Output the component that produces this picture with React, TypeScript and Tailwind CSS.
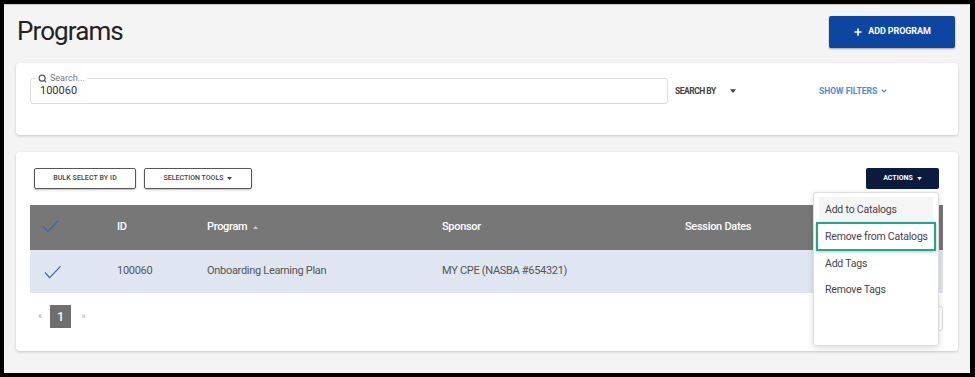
import React from 'react';
import { Search, Plus, ChevronDown } from 'lucide-react';

const Caret: React.FC<{ className?: string }> = ({ className }) => (
  <svg viewBox="0 0 8 5" className={className} fill="currentColor">
    <path d="M0 0h8L4 5z" />
  </svg>
);

const Check: React.FC<{ className?: string }> = ({ className }) => (
  <svg viewBox="0 0 18 14" className={className} fill="none" stroke="currentColor" strokeWidth="1.3">
    <path d="M1 7.5l5 5.5L17.5 1" />
  </svg>
);

const menuItems = ['Add to Catalogs', 'Remove from Catalogs', 'Add Tags', 'Remove Tags'];

const App: React.FC = () => {
  return (
    <div className="w-[975px] h-[377px] bg-black pt-[4px] pl-[4px] pr-[5px] pb-[4px] font-['Roboto',sans-serif]">
      <div className="h-full bg-[#f4f4f4] border-t border-[#c8c8c8] px-[12px] pt-[11px]">
        {/* Header */}
        <div className="flex items-start justify-between h-[32px]">
          <h1 className="text-[26px] leading-[28px] tracking-[-0.9px] text-[#222] mt-[1px] ml-[1px]">Programs</h1>
          <button className="w-[126px] h-[32px] mr-[3px] bg-[#0d46a0] rounded-[2px] shadow-[0_1px_2px_rgba(0,0,0,0.35)] flex items-center justify-center gap-[5px] text-white text-[9px] tracking-[-0.1px] font-bold">
            <Plus className="w-[10px] h-[10px]" strokeWidth={4} />
            ADD PROGRAM
          </button>
        </div>

        {/* Search card */}
        <div className="mt-[15px] h-[72px] bg-white rounded-[4px] shadow-[0_1px_3px_rgba(0,0,0,0.18)] px-[14px] pt-[15px]">
          <div className="flex items-center">
            <div className="relative w-[638px] h-[26px] border border-[#dcdcdc] rounded-[3px] flex items-center pl-[9px]">
              <div className="absolute -top-[6px] left-[5px] bg-white px-[2px] flex items-center gap-[3px] text-[9px] leading-[10px] text-[#777]">
                <Search className="w-[9px] h-[9px] text-[#555]" strokeWidth={3} />
                Search...
              </div>
              <span className="text-[11px] text-[#333] mt-[1px]">100060</span>
            </div>
            <div className="w-[151px] pl-[7px] flex items-center gap-[14px] text-[8.5px] tracking-[-0.5px] font-bold text-[#444]">
              SEARCH BY
              <Caret className="w-[6px] h-[4px]" />
            </div>
            <div className="flex items-center gap-[3px] text-[8.5px] font-bold text-[#4a8cd8]">
              SHOW FILTERS
              <ChevronDown className="w-[8px] h-[8px]" strokeWidth={3.5} />
            </div>
          </div>
        </div>

        {/* Table card */}
        <div className="relative mt-[17px] h-[199px] bg-white rounded-[4px] shadow-[0_1px_3px_rgba(0,0,0,0.18)] px-[14px] pt-[16px]">
          <div className="flex items-center h-[21px]">
            <button className="ml-[4px] w-[102px] h-[21px] border border-[#555] rounded-[2px] shadow-[0_1px_2px_rgba(0,0,0,0.25)] text-[7px] font-medium text-[#444] tracking-[0.1px]">
              BULK SELECT BY ID
            </button>
            <button className="ml-[8px] w-[108px] h-[21px] border border-[#555] rounded-[2px] shadow-[0_1px_2px_rgba(0,0,0,0.25)] text-[7px] font-medium text-[#444] flex items-center justify-center gap-[4px]">
              SELECTION TOOLS
              <Caret className="w-[5px] h-[3px]" />
            </button>
            <button className="ml-auto mr-[5px] w-[73px] h-[21px] bg-[#0a1b3d] rounded-[2px] text-[7px] font-bold text-white flex items-center justify-center gap-[4px]">
              ACTIONS
              <Caret className="w-[5px] h-[3px]" />
            </button>
          </div>

          <div className="mt-[16px] mr-[1px]">
            <div className="grid grid-cols-[87px_90px_235px_243px_1fr] h-[45px] items-center bg-[#777777] text-[11px] tracking-[-0.3px] text-white font-medium">
              <div className="pl-[12px] -mt-[3px]">
                <Check className="w-[17px] h-[14px] text-[#3b67ad]" />
              </div>
              <div>ID</div>
              <div className="flex items-center gap-[6px]">
                Program
                <svg viewBox="0 0 6 3" className="w-[5px] h-[3px] text-[#ddd]" fill="currentColor">
                  <path d="M0 3h6L3 0z" />
                </svg>
              </div>
              <div>Sponsor</div>
              <div>Session Dates</div>
            </div>
            <div className="grid grid-cols-[87px_90px_235px_243px_1fr] h-[43px] items-center bg-[#dfe6f1] text-[11px] tracking-[-0.3px] text-[#555]">
              <div className="pl-[14px]">
                <Check className="w-[17px] h-[14px] text-[#3b67ad]" />
              </div>
              <div>100060</div>
              <div>Onboarding Learning Plan</div>
              <div>MY CPE (NASBA #654321)</div>
              <div />
            </div>
          </div>

          <div className="mt-[12px] flex items-start">
            <div className="flex items-center h-[23px] text-[9px] text-[#aaa]">
              <span className="ml-[8px]">«</span>
              <span className="ml-[8px] w-[21px] h-[23px] bg-[#6f6f6f] text-white text-[12px] font-medium flex items-center justify-center">1</span>
              <span className="ml-[10px]">»</span>
            </div>
            <div className="ml-auto mr-[1px] mt-[1px] w-[40px] h-[25px] border border-[#ddd] rounded-[3px]" />
          </div>

          {/* Actions dropdown */}
          <div className="absolute left-[797px] top-[40px] w-[126px] h-[154px] bg-white border border-[#ddd] rounded-[3px] shadow-[0_2px_6px_rgba(0,0,0,0.15)] pt-[4px] px-[5px] text-[10.5px] tracking-[-0.2px] text-[#444] whitespace-nowrap">
            {menuItems.map((item, i) => (
              <div
                key={item}
                className={
                  i === 0
                    ? 'h-[25px] bg-[#f5f5f5] flex items-center pl-[6px]'
                    : i === 1
                    ? '-mx-[3px] h-[29px] border-2 border-[#1fa88b] shadow-[0_1px_3px_rgba(0,0,0,0.25)] flex items-center pl-[7px]'
                    : 'h-[26px] flex items-center pl-[6px]'
                }
              >
                {item}
              </div>
            ))}
          </div>
        </div>
      </div>
    </div>
  );
};

export default App;
